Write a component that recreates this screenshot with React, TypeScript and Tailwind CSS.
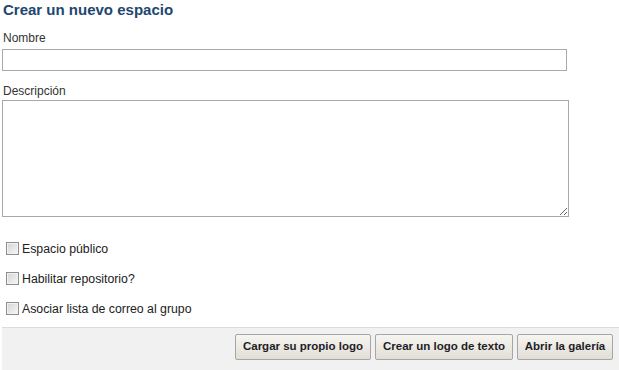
import { useState } from 'react';

const opciones = ['Espacio público', 'Habilitar repositorio?', 'Asociar lista de correo al grupo'];

const botones = [
  { label: 'Cargar su propio logo', width: 'w-[136px]' },
  { label: 'Crear un logo de texto', width: 'w-[138px]' },
  { label: 'Abrir la galería', width: 'w-[96px]' },
];

export default function App() {
  const [checks, setChecks] = useState<boolean[]>([false, false, false]);

  const toggle = (idx: number) => {
    setChecks(prev => prev.map((v, i) => (i === idx ? !v : v)));
  };

  return (
    <div className="w-[619px] h-[370px] overflow-hidden bg-white text-[#222] font-['Liberation_Sans',Arial,sans-serif]">
      <h2 className="mt-[1px] pl-[3px] text-[15px] leading-[18px] font-bold text-[#22466f]">Crear un nuevo espacio</h2>

      <div className="pl-[2px]">
        <label className="block mt-[12px] pl-[1px] text-[12px] leading-[15px] text-[#333]">Nombre</label>
        <input
          type="text"
          className="block mt-[3px] w-[565px] h-[22px] border border-[#a9a9a9] bg-white px-1 text-[12px] outline-none"
        />

        <label className="block mt-[13px] pl-[1px] text-[12px] leading-[15px] text-[#333]">Descripción</label>
        <textarea className="block mt-[1px] w-[567px] h-[117px] border border-[#a9a9a9] bg-white p-1 text-[12px] outline-none resize" />
      </div>

      <div className="mt-[25px] pl-[6px] flex flex-col gap-[17px]">
        {opciones.map((op, i) => (
          <label key={i} className="flex items-center gap-[3px] h-[13px] text-[12.3px] text-[#222] cursor-pointer">
            <input
              type="checkbox"
              checked={checks[i]}
              onChange={() => toggle(i)}
              className="appearance-none w-[13px] h-[13px] border border-[#8e8e8e] bg-gradient-to-br from-[#d4d4d4] to-[#f7f7f7] shadow-[inset_0_0_0_1px_#f2f2f2] checked:bg-[#7a9cc6]"
            />
            <span className="leading-[13px] pt-[1px]">{op}</span>
          </label>
        ))}
      </div>

      <div className="mt-[12px] ml-[2px] border-t border-[#dcdcdc] bg-[#f1f1f1] h-[60px] pt-[6px] pr-[6px] flex justify-end gap-[4px]">
        {botones.map((b, i) => (
          <button
            key={i}
            className={`${b.width} h-[26px] rounded-[2px] border border-[#a6a6a6] bg-gradient-to-b from-[#f7f5f1] to-[#e2ded6] text-[11.5px] font-bold text-[#1e1e28]`}
          >
            {b.label}
          </button>
        ))}
      </div>
    </div>
  );
}
